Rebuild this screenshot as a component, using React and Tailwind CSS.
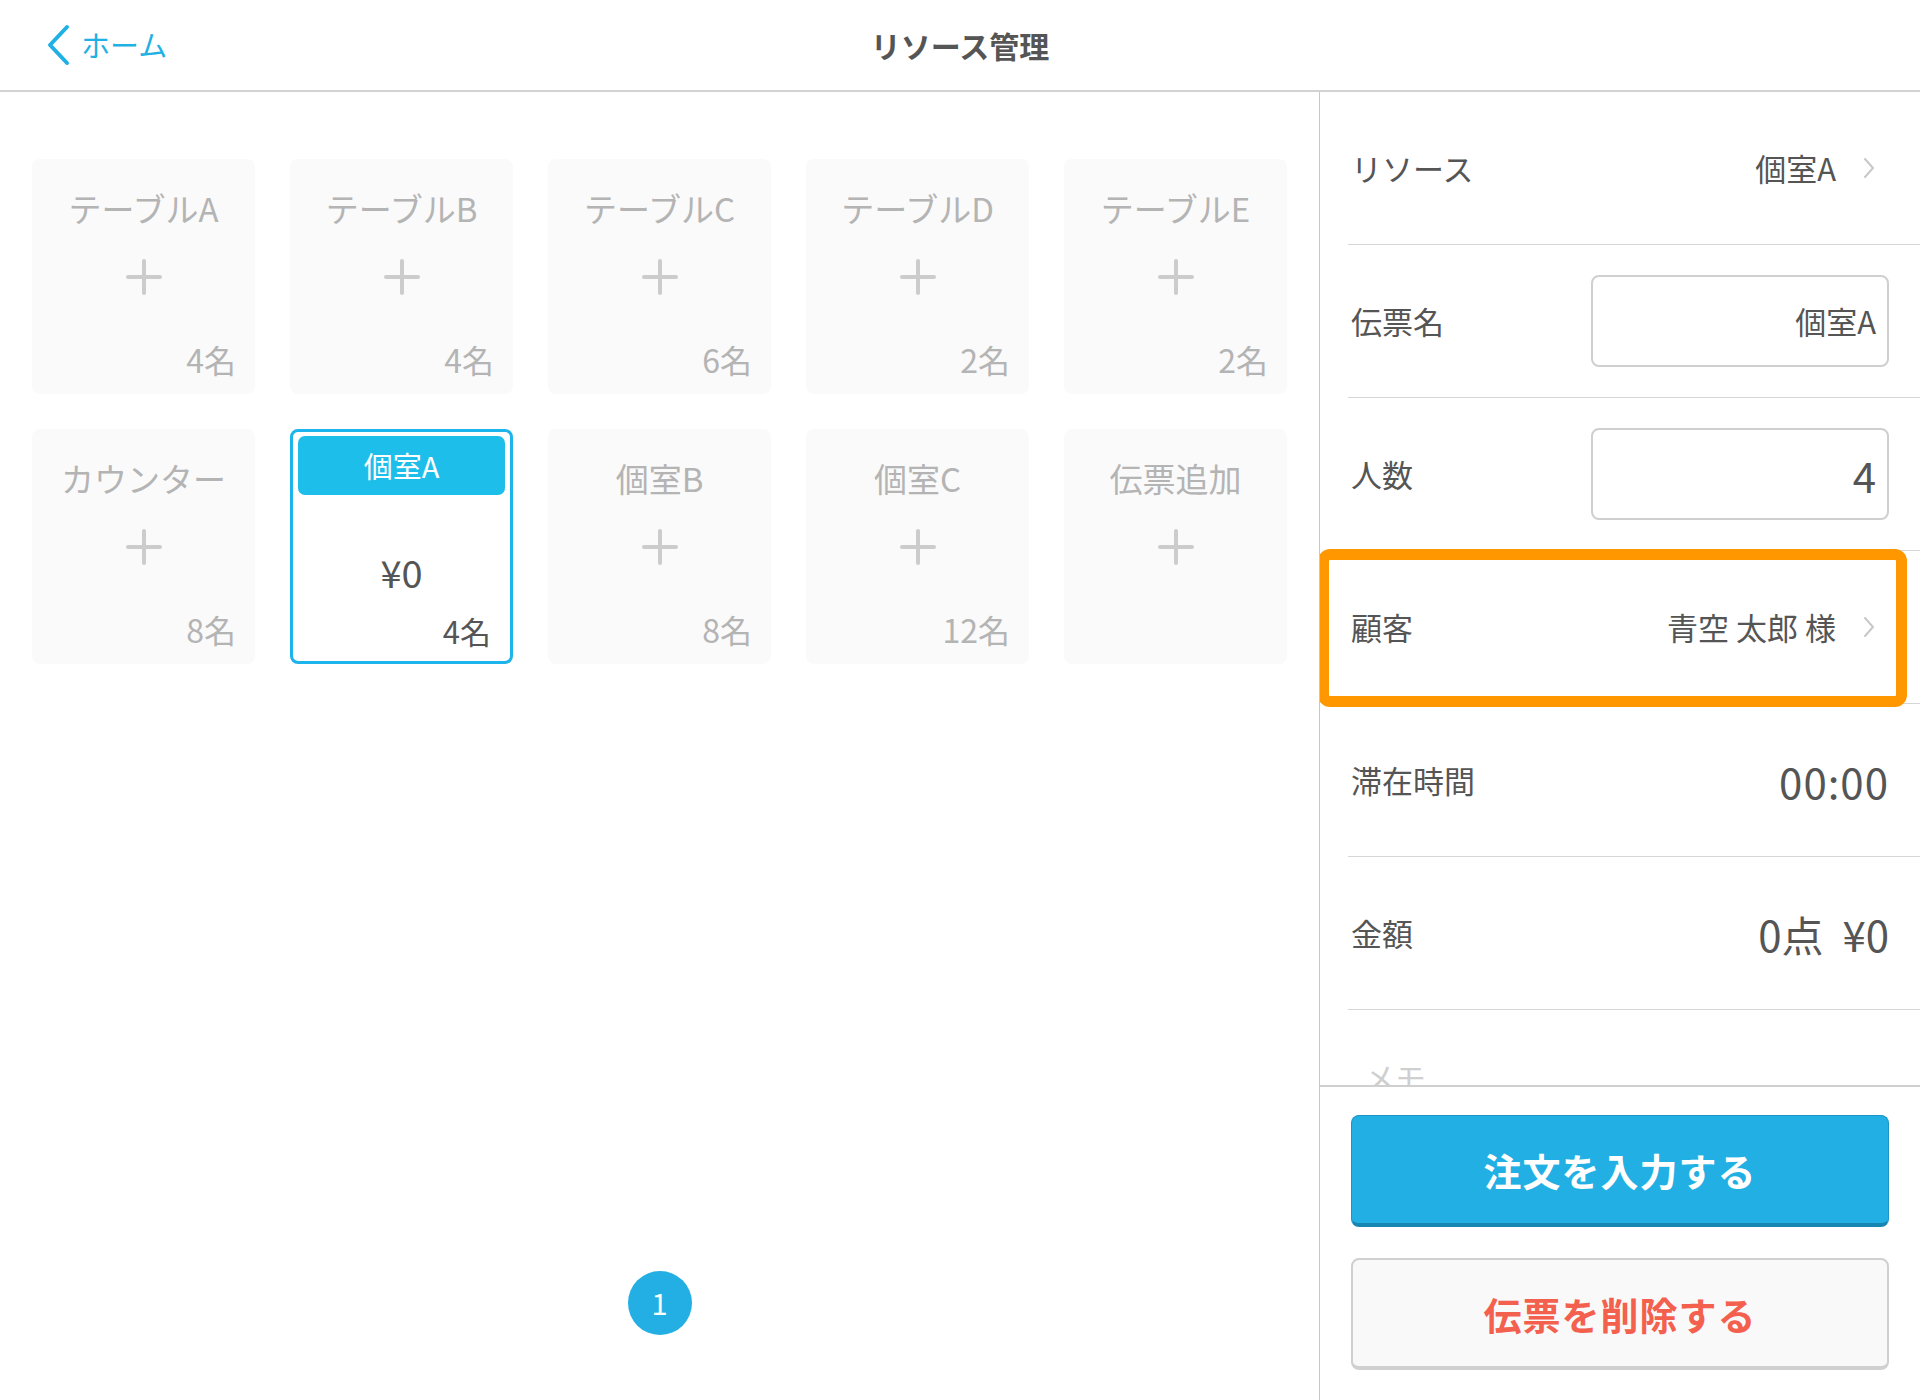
const tables = [
  { name: "テーブルA", seats: "4名" },
  { name: "テーブルB", seats: "4名" },
  { name: "テーブルC", seats: "6名" },
  { name: "テーブルD", seats: "2名" },
  { name: "テーブルE", seats: "2名" },
  { name: "カウンター", seats: "8名" },
  { name: "個室A", seats: "4名", active: true, amount: "¥0" },
  { name: "個室B", seats: "8名" },
  { name: "個室C", seats: "12名" },
  { name: "伝票追加", seats: "" },
];

function Plus() {
  return (
    <svg width="38" height="38" viewBox="0 0 38 38" className="block">
      <path d="M19 3v32M3 19h32" stroke="#cccccc" strokeWidth="4" strokeLinecap="round" />
    </svg>
  );
}

function Chevron() {
  return (
    <svg width="12" height="22" viewBox="0 0 12 22" className="block">
      <path d="M2 2l8 9-8 9" fill="none" stroke="#c8c8c8" strokeWidth="2" strokeLinecap="round" strokeLinejoin="round" />
    </svg>
  );
}

function ResourceCard({ item }) {
  if (item.active) {
    return (
      <div className="h-[235px] rounded-[8px] border-[3px] border-[#1cb4ea] bg-white flex flex-col px-[5px] pt-[4px]">
        <div className="h-[59px] shrink-0 rounded-[7px] bg-[#1ebeeb] flex items-center justify-center text-white text-[29px]">
          {item.name}
        </div>
        <div className="mt-[58px] text-center text-[#555] text-[38px] leading-none">{item.amount}</div>
        <div className="mt-[24px] self-end pr-[14px] text-[#555] text-[31px] leading-none">{item.seats}</div>
      </div>
    );
  }
  return (
    <div className="h-[235px] rounded-[8px] bg-[#fafafa] flex flex-col items-center pt-[33px] text-[#b4b4b4]">
      <div className="text-[33px] leading-none">{item.name}</div>
      <div className="mt-[33px]"><Plus /></div>
      <div className="mt-[47px] self-end pr-[19px] h-[32px] text-[32px] leading-none">{item.seats}</div>
    </div>
  );
}

function Row({ label, children, highlight }) {
  return (
    <div className="relative ml-[28px] h-[153px] border-b border-[#d6d6d6] flex items-center justify-between pl-[3px] pr-[31px]">
      <div className="text-[31px] text-[#555]">{label}</div>
      {children}
      {highlight && (
        <div className="absolute left-[-30px] right-[13px] top-[-2px] bottom-[-4px] border-[11px] border-[#ff9800] rounded-[12px]" />
      )}
    </div>
  );
}

function Field({ value, big }) {
  return (
    <div className={"w-[298px] h-[92px] rounded-[8px] border-2 border-[#cfcfcf] flex items-center justify-end pr-[11px] text-[#555] " + (big ? "text-[42px]" : "text-[31px]")}>
      {value}
    </div>
  );
}

function LinkValue({ children }) {
  return (
    <div className="flex items-center gap-[27px] text-[31px] text-[#555] mr-[14px]">
      <span>{children}</span>
      <Chevron />
    </div>
  );
}

export default function App() {
  return (
    <div className="w-[1920px] h-[1400px] bg-white flex flex-col overflow-hidden font-['Noto_Sans_CJK_JP','Noto_Sans',sans-serif]">
      {/* header */}
      <div className="h-[92px] shrink-0 border-b-2 border-[#d2d2d2] grid grid-cols-[1fr_auto_1fr] items-center">
        <div className="flex items-center gap-[10px] pl-[45px] text-[#1fb0e4]">
          <svg width="26" height="42" viewBox="0 0 26 42" className="block">
            <path d="M22 3L5 21l17 18" fill="none" stroke="#1fb0e4" strokeWidth="4" strokeLinecap="round" strokeLinejoin="round" />
          </svg>
          <span className="text-[29px]">ホーム</span>
        </div>
        <div className="text-[30px] font-bold text-[#555]">リソース管理</div>
        <div />
      </div>

      <div className="flex flex-1 min-h-0">
        {/* resource grid */}
        <div className="w-[1319px] shrink-0 flex flex-col px-[32px] pt-[67px] pb-[65px]">
          <div className="grid grid-cols-5 gap-[35px]">
            {tables.map((t) => (
              <ResourceCard key={t.name} item={t} />
            ))}
          </div>
          <div className="mt-auto flex justify-center">
            <div className="w-[64px] h-[64px] rounded-full bg-[#23afe3] flex items-center justify-center text-white text-[29px]">1</div>
          </div>
        </div>

        {/* detail panel */}
        <div className="flex-1 border-l border-[#c8c8c8] flex flex-col">
          <div className="h-[993px] overflow-hidden">
            <Row label="リソース">
              <LinkValue>個室A</LinkValue>
            </Row>
            <Row label="伝票名">
              <Field value="個室A" />
            </Row>
            <Row label="人数">
              <Field value="4" big />
            </Row>
            <Row label="顧客" highlight>
              <LinkValue>青空 太郎 様</LinkValue>
            </Row>
            <Row label="滞在時間">
              <div className="text-[42px] text-[#555] tracking-[1px]">00:00</div>
            </Row>
            <Row label="金額">
              <div className="text-[42px] text-[#555]">0点&nbsp;&nbsp;¥0</div>
            </Row>
            <div className="ml-[28px] pl-[16px] pt-[44px] text-[31px] text-[#cfcfcf]">メモ</div>
          </div>
          <div className="flex-1 border-t-2 border-[#cfcfcf] flex flex-col gap-[31px] pl-[31px] pr-[31px] pt-[28px]">
            <button className="h-[112px] rounded-[8px] bg-[#22afe3] border border-[#1b95c6] border-b-[4px] border-b-[#1886b3] text-white text-[38px] font-bold tracking-[1px]">
              注文を入力する
            </button>
            <button className="h-[112px] rounded-[8px] bg-[#f9f9f9] border-2 border-[#d0d0d0] border-b-[4px] text-[#f4604e] text-[38px] font-bold tracking-[1px]">
              伝票を削除する
            </button>
          </div>
        </div>
      </div>
    </div>
  );
}
